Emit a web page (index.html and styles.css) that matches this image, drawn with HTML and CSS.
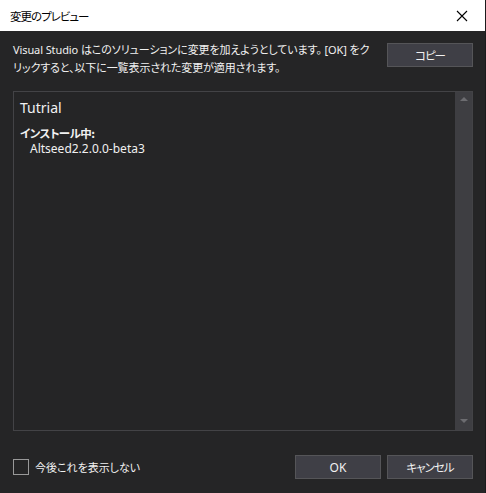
FILE: index.html
```html
<!DOCTYPE html>
<html lang="ja">
<head>
<meta charset="utf-8">
<link rel="stylesheet" href="styles.css">
</head>
<body>
<div class="dialog">
  <div class="titlebar">
    <span class="title">変更のプレビュー</span>
    <span class="close">
      <svg width="12" height="12" viewBox="0 0 12 12"><path d="M1 1 L11 11 M11 1 L1 11" stroke="#000" stroke-width="1.1" fill="none"/></svg>
    </span>
  </div>
  <div class="main">
    <div class="top">
      <p class="desc">Visual Studio はこのソリューションに変更を加えようとしています。 [OK] をク<br>リックすると、以下に一覧表示された変更が適用されます。</p>
      <button class="btn copy">コピー</button>
    </div>
    <div class="box">
      <div class="content">
        <div class="proj">Tutrial</div>
        <div class="head">インストール中:</div>
        <div class="item">Altseed2.2.0.0-beta3</div>
      </div>
      <div class="scroll">
        <span class="arrow up"></span>
        <span class="arrow down"></span>
      </div>
    </div>
    <div class="footer">
      <label class="check"><span class="cb"></span>今後これを表示しない</label>
      <div class="buttons">
        <button class="btn">OK</button>
        <button class="btn jp">キャンセル</button>
      </div>
    </div>
  </div>
</div>
</body>
</html>
```
FILE: styles.css
```css
* { box-sizing: border-box; }
html, body { margin: 0; padding: 0; }
body {
  width: 486px;
  height: 493px;
  background: #252526;
  font-family: "Noto Sans", "Noto Sans CJK JP", sans-serif;
  font-size: 12px;
  color: #f1f1f1;
  overflow: hidden;
  font-feature-settings: "palt";
}
.dialog {
  height: 493px;
  display: flex;
  flex-direction: column;
  border-right: 1px solid #1b1b1c;
}
.titlebar {
  height: 31px;
  background: #ffffff;
  display: flex;
  align-items: center;
  justify-content: space-between;
  color: #000;
  padding-left: 10px;
}
.title {
  font-family: "Noto Sans CJK JP", sans-serif;
  font-size: 11.5px;
  letter-spacing: -1px;
  line-height: 16px;
  font-feature-settings: "palt";
}
.close {
  width: 46px;
  height: 31px;
  display: flex;
  align-items: center;
  justify-content: center;
}
.main {
  flex: 1;
  display: flex;
  flex-direction: column;
  padding: 10px 12px 13px 13px;
}
.top {
  display: flex;
  justify-content: space-between;
  align-items: flex-start;
}
.desc {
  margin: 0;
  line-height: 18px;
  font-size: 11px;
  white-space: nowrap;
  letter-spacing: -0.1px;
}
.btn {
  flex-shrink: 0;
  width: 86px;
  height: 24px;
  background: #3f3f46;
  border: 1px solid #555558;
  color: #f1f1f1;
  font-family: "Noto Sans", "Noto Sans CJK JP", sans-serif;
  font-feature-settings: "palt";
  font-size: 12px;
  padding: 0;
}
.btn.jp, .copy {
  font-size: 11.5px;
  letter-spacing: -1px;
}
.copy { margin-top: 2px; }
.box {
  margin-top: 14px;
  height: 340px;
  border: 1px solid #434346;
  display: flex;
}
.content {
  flex: 1;
  padding: 5px 6px;
}
.proj {
  font-size: 14px;
  line-height: 22px;
}
.head {
  margin-top: 7px;
  font-weight: bold;
  font-size: 11.5px;
  line-height: 15px;
  letter-spacing: -0.5px;
  font-family: "Noto Sans CJK JP", sans-serif;
  font-feature-settings: "palt";
}
.item {
  padding-left: 10px;
  line-height: 15px;
}
.scroll {
  width: 17px;
  background: #3e3e42;
  display: flex;
  flex-direction: column;
  justify-content: space-between;
  align-items: center;
  padding: 5px 0 7px;
}
.arrow {
  width: 0;
  height: 0;
  border-left: 4px solid transparent;
  border-right: 4px solid transparent;
}
.up { border-bottom: 4px solid #6c6c70; }
.down { border-top: 4px solid #6c6c70; }
.footer {
  margin-top: 24px;
  display: flex;
  justify-content: space-between;
  align-items: center;
}
.check {
  display: flex;
  align-items: center;
  gap: 6px;
  font-size: 11px;
  font-family: "Noto Sans CJK JP", sans-serif;
  font-feature-settings: "palt";
}
.cb {
  width: 16px;
  height: 16px;
  border: 1px solid #999999;
}
.buttons {
  display: flex;
  gap: 6px;
}
```
